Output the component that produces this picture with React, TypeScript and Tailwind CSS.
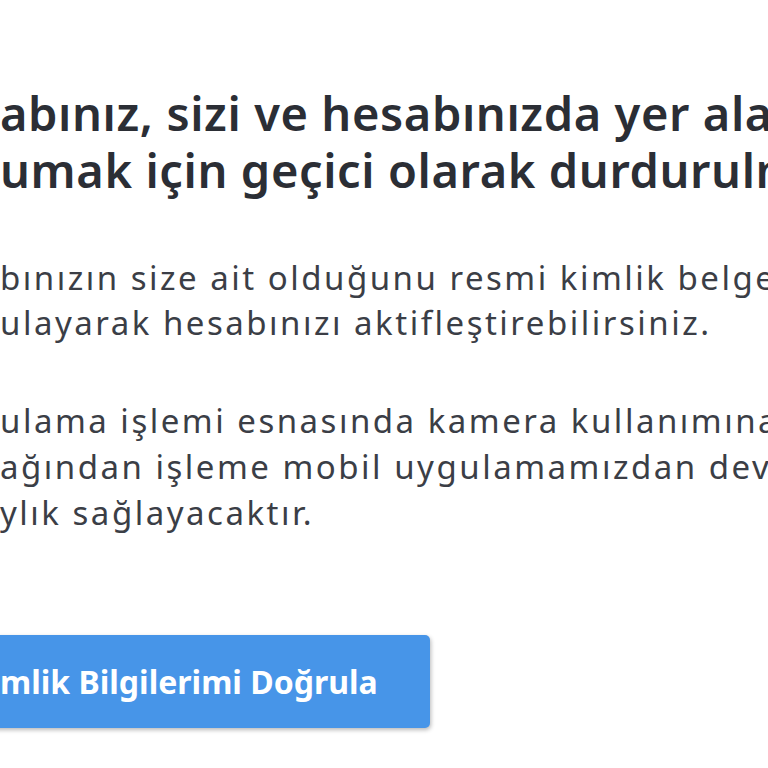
type Line = { hidden: string; shown: string };

function CutLine({ hidden, shown }: Line) {
  // the prefix sits left of the viewport edge, the rest starts at x=0
  return (
    <div className="flex whitespace-nowrap">
      <span className="flex w-0 justify-end">{hidden}</span>
      <span>{shown}</span>
    </div>
  );
}

export default function App() {
  const heading: Line[] = [
    { hidden: "Hes", shown: "abınız, sizi ve hesabınızda yer alan bilgileri" },
    { hidden: "kor", shown: "umak için geçici olarak durdurulmuştur." },
  ];
  const para1: Line[] = [
    { hidden: "Hesa", shown: "bınızın size ait olduğunu resmi kimlik belgenizle" },
    { hidden: "doğr", shown: "ulayarak hesabınızı aktifleştirebilirsiniz." },
  ];
  const para2: Line[] = [
    { hidden: "Doğr", shown: "ulama işlemi esnasında kamera kullanımına ihtiyaç" },
    { hidden: "duyulac", shown: "ağından işleme mobil uygulamamızdan devam etmeniz" },
    { hidden: "kola", shown: "ylık sağlayacaktır." },
  ];

  return (
    <div className="w-[768px] h-[768px] overflow-hidden bg-white font-['Noto_Sans',sans-serif]">
      <div className="pt-[85px]">
        <h1 className="text-[47px] leading-[57px] font-semibold tracking-[0.6px] text-[#2b2e35]">
          {heading.map((l) => (
            <CutLine key={l.shown} {...l} />
          ))}
        </h1>
        <div className="mt-[56px] text-[33px] leading-[45px] tracking-[2.5px] text-[#3b3e46]">
          {para1.map((l) => (
            <CutLine key={l.shown} {...l} />
          ))}
        </div>
        <div className="mt-[53px] text-[33px] leading-[46px] tracking-[2.5px] text-[#3b3e46]">
          {para2.map((l) => (
            <CutLine key={l.shown} {...l} />
          ))}
        </div>
        <div className="mt-[99px] flex">
          <button className="ml-[-40px] h-[93px] pl-[40px] pr-[52px] rounded-[5px] bg-[#4795e8] text-white text-[32px] font-bold shadow-[1px_2px_4px_rgba(0,0,0,0.28)]">
            <CutLine hidden="Ki" shown="mlik Bilgilerimi Doğrula" />
          </button>
        </div>
      </div>
    </div>
  );
}
